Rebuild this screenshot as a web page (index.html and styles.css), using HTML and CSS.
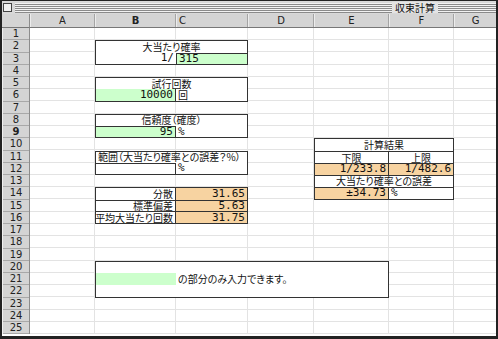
FILE: index.html
```html
<!DOCTYPE html>
<html lang="ja">
<head>
    <meta charset="UTF-8">
    <title>収束計算</title>
    <link rel="stylesheet" href="styles.css">
</head>
<body>
    <div class="window">
        <div class="titlebar">
            <span class="close-box"></span>
            <span class="stripes"></span>
            <span class="title">収束計算</span>
            <span class="stripes tail"></span>
        </div>

        <div class="sheet">
            <div class="corner"></div>
            <div class="col-heads">
                <div class="col-head a">A</div>
                <div class="col-head b active">B</div>
                <div class="col-head c">C</div>
                <div class="col-head d">D</div>
                <div class="col-head e">E</div>
                <div class="col-head f">F</div>
                <div class="col-head g">G</div>
            </div>

            <div class="row-heads">
                <div>1</div><div>2</div><div>3</div><div>4</div><div>5</div>
                <div>6</div><div>7</div><div>8</div><div class="active">9</div><div>10</div>
                <div>11</div><div>12</div><div>13</div><div>14</div><div>15</div>
                <div>16</div><div>17</div><div>18</div><div>19</div><div>20</div>
                <div>21</div><div>22</div><div>23</div><div>24</div><div>25</div>
            </div>

            <div class="cells">
                <!-- 大当たり確率 -->
                <div class="box prob">
                    <div class="c mid">大当たり確率</div>
                    <div class="c r num">1/</div>
                    <div class="c num in bl bt">315</div>
                </div>

                <!-- 試行回数 -->
                <div class="box trials">
                    <div class="c mid">試行回数</div>
                    <div class="c r num in br">10000</div>
                    <div class="c">回</div>
                </div>

                <!-- 信頼度 -->
                <div class="box conf">
                    <div class="c mid">信頼度（確度）</div>
                    <div class="c r num in selected">95</div>
                    <div class="c num">%</div>
                </div>

                <!-- 範囲 -->
                <div class="box range">
                    <div class="c wide">範囲（大当たり確率との誤差？%）</div>
                    <div class="c bt br"></div>
                    <div class="c num">%</div>
                </div>

                <!-- 分散など -->
                <div class="box stats">
                    <div class="c r br">分散</div>
                    <div class="c r num out">31.65</div>
                    <div class="c r br bt">標準偏差</div>
                    <div class="c r num out bt">5.63</div>
                    <div class="c r br bt">平均大当たり回数</div>
                    <div class="c r num out bt">31.75</div>
                </div>

                <!-- 計算結果 -->
                <div class="box result">
                    <div class="c mid">計算結果</div>
                    <div class="c ctr bt br">下限</div>
                    <div class="c ctr bt">上限</div>
                    <div class="c r num out bt br">1/233.8</div>
                    <div class="c r num out bt">1/482.6</div>
                    <div class="c mid bt">大当たり確率との誤差</div>
                    <div class="c r num out bt br">±34.73</div>
                    <div class="c num bt">%</div>
                </div>

                <!-- 説明 -->
                <div class="box note">
                    <div class="c wide"></div>
                    <div class="c in"></div>
                    <div class="c">の部分のみ入力できます。</div>
                    <div class="c wide"></div>
                </div>
            </div>
        </div>
    </div>
</body>
</html>
```

FILE: styles.css
```css
body {
    margin: 0;
    background-color: #fff;
    font-family: "Noto Sans CJK JP", sans-serif;
}
.window {
    width: 498px;
    height: 339px;
    box-sizing: border-box;
    border: 1px solid #222;
    border-left-width: 2px;
    border-right-width: 2px;
    border-bottom-width: 3px;
    overflow: hidden;
    background-color: #fff;
}

/* title bar */
.titlebar {
    display: flex;
    align-items: center;
    height: 13px;
    box-sizing: border-box;
    padding: 1px 0 1px 1px;
    background-color: #d8d8d8;
}
.close-box {
    width: 9px;
    height: 9px;
    box-sizing: border-box;
    border: 1px solid #444;
    background-color: #f0f0f0;
    margin-right: 3px;
}
.stripes {
    flex-grow: 1;
    height: 10px;
    background: repeating-linear-gradient(to bottom, #f2f2f2 0 1px, #8a8a8a 1px 2px);
}
.stripes.tail {
    flex-grow: 0;
    width: 58px;
}
.title {
    padding: 0 3px;
    font-size: 10px;
    line-height: 11px;
    color: #111;
    background-color: #e4e4e4;
    font-feature-settings: "palt";
}

/* sheet */
.sheet {
    display: grid;
    grid-template-columns: 28px 466px;
    grid-template-rows: 14px 306.25px;
}
.corner {
    background-color: #d4d4d4;
    border-right: 1px solid #8c8c8c;
    border-bottom: 1px solid #777;
    box-sizing: border-box;
}
.col-heads {
    display: flex;
    background-color: #d4d4d4;
    border-bottom: 1px solid #777;
    box-sizing: border-box;
}
.col-head {
    box-sizing: border-box;
    border-right: 1px solid #a4a4a4;
    border-left: 1px solid #ececec;
    font-family: "DejaVu Sans", sans-serif;
    font-size: 10px;
    line-height: 13px;
    text-align: center;
    color: #222;
}
.col-head.a { width: 65px; }
.col-head.b { width: 81px; }
.col-head.c { width: 72px; }
.col-head.d { width: 66px; }
.col-head.e { width: 75px; }
.col-head.f { width: 65px; }
.col-head.g { width: 42px; border-right: none; }
.col-head.active, .row-heads .active {
    font-weight: bold;
}
.row-heads {
    display: grid;
    grid-template-rows: repeat(25, 12.25px);
    background-color: #d4d4d4;
    border-right: 1px solid #8c8c8c;
    border-left: 1px solid #f0f0f0;
    box-sizing: border-box;
}
.row-heads div {
    border-bottom: 1px solid #a8a8a8;
    font-family: "DejaVu Sans", sans-serif;
    font-size: 10px;
    line-height: 11px;
    text-align: center;
    color: #222;
}

.cells {
    display: grid;
    grid-template-columns: 65px 81px 72px 66px 75px 65px 42px;
    grid-template-rows: repeat(25, 12.25px);
    background:
        linear-gradient(to right,
            transparent 0 64px, #e3e3e3 64px 65px,
            transparent 65px 145px, #e3e3e3 145px 146px,
            transparent 146px 217px, #e3e3e3 217px 218px,
            transparent 218px 283px, #e3e3e3 283px 284px,
            transparent 284px 358px, #e3e3e3 358px 359px,
            transparent 359px 423px, #e3e3e3 423px 424px,
            transparent 424px),
        repeating-linear-gradient(to bottom, transparent 0 11.25px, #e3e3e3 11.25px 12.25px);
}

/* bordered blocks */
.box {
    display: grid;
    grid-template-columns: 80px 1fr;
    grid-auto-rows: 1fr;
    border: 1px solid #333;
    background-color: #fff;
    font-size: 10px;
    color: #111;
    font-feature-settings: "palt";
}
.prob { grid-row: 2 / 4; grid-column: 2 / 4; }
.trials { grid-row: 5 / 7; grid-column: 2 / 4; }
.conf { grid-row: 8 / 10; grid-column: 2 / 4; }
.range { grid-row: 11 / 13; grid-column: 2 / 4; }
.stats { grid-row: 14 / 17; grid-column: 2 / 4; }
.result {
    grid-row: 10 / 15;
    grid-column: 5 / 7;
    grid-template-columns: 74px 1fr;
}
.note { grid-row: 20 / 23; grid-column: 2 / 6; }

.c {
    display: flex;
    align-items: center;
    padding: 0 2px;
    white-space: nowrap;
    line-height: 10px;
    min-width: 0;
}
.c.r { justify-content: flex-end; }
.c.ctr { justify-content: center; }
.c.mid {
    grid-column: 1 / -1;
    justify-content: center;
}
.c.wide { grid-column: 1 / -1; }
.num {
    font-family: "DejaVu Sans Mono", monospace;
    font-size: 11px;
}
.in { background-color: #ccffcc; }
.out { background-color: #f7d3a1; }
.bl { border-left: 1px solid #333; }
.bt { border-top: 1px solid #333; }
.br { border-right: 1px solid #333; }
.selected {
    border-top: 1px solid #333;
    border-right: 1px solid #333;
}
```
